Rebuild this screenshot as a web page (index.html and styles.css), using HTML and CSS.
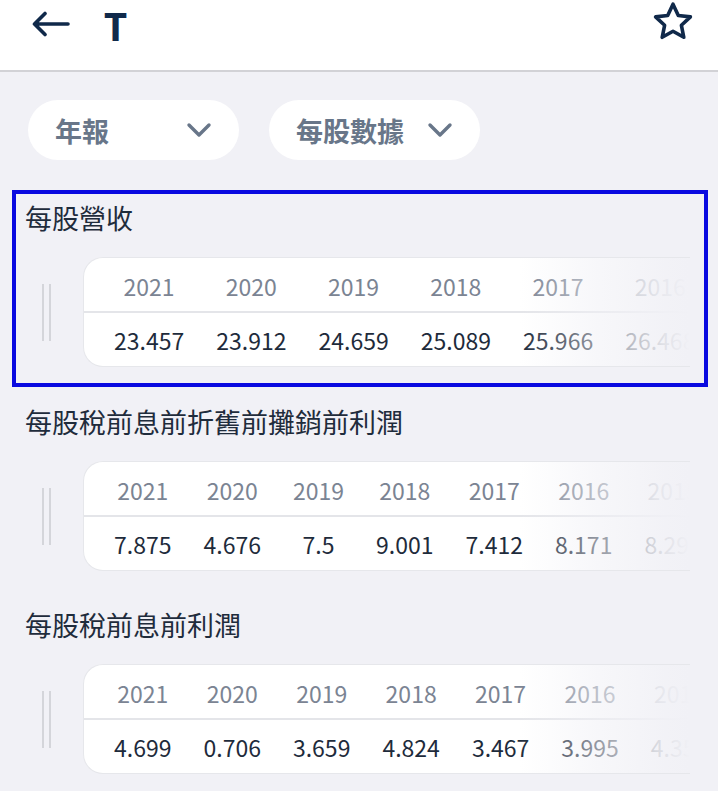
FILE: index.html
```html
<!DOCTYPE html>
<html lang="zh-Hant">
<head>
<meta charset="utf-8">
<title>T</title>
<link rel="stylesheet" href="styles.css">
</head>
<body>
<header class="topbar">
  <div class="topbar-left">
    <svg class="back" width="38" height="26" viewBox="0 0 38 26" aria-hidden="true">
      <path d="M36 13H3M13 2.5L2.5 13L13 23.5" fill="none" stroke="#10294a" stroke-width="3.6" stroke-linecap="round" stroke-linejoin="round"/>
    </svg>
    <span class="ticker">T</span>
  </div>
  <svg class="star" width="42" height="40" viewBox="0 0 42 40" aria-hidden="true">
    <path d="M21 3.2l5.3 11.3 12.1 1.4-9 8.4 2.4 12-10.8-6.1-10.8 6.1 2.4-12-9-8.4 12.1-1.4z" fill="none" stroke="#10294a" stroke-width="3.6" stroke-linejoin="round"/>
  </svg>
</header>

<div class="filters">
  <div class="pill"><span>年報</span>
    <svg width="26" height="16" viewBox="0 0 26 16" aria-hidden="true"><path d="M3 3l10 10L23 3" fill="none" stroke="#687689" stroke-width="3.4" stroke-linecap="round" stroke-linejoin="round"/></svg>
  </div>
  <div class="pill"><span>每股數據</span>
    <svg width="26" height="16" viewBox="0 0 26 16" aria-hidden="true"><path d="M3 3l10 10L23 3" fill="none" stroke="#687689" stroke-width="3.4" stroke-linecap="round" stroke-linejoin="round"/></svg>
  </div>
</div>

<section class="block selected">
  <h2 class="block-title">每股營收</h2>
  <div class="row">
    <div class="grip"></div>
    <div class="card">
      <table class="data">
        <tr class="years"><td class="lead"></td><td>2021</td><td>2020</td><td>2019</td><td>2018</td><td>2017</td><td>2016</td><td>2015</td></tr>
        <tr class="vals"><td class="lead"></td><td>23.457</td><td>23.912</td><td>24.659</td><td>25.089</td><td>25.966</td><td>26.468</td><td>27.101</td></tr>
      </table>
      <div class="fade"></div>
    </div>
  </div>
</section>

<section class="block">
  <h2 class="block-title">每股稅前息前折舊前攤銷前利潤</h2>
  <div class="row">
    <div class="grip"></div>
    <div class="card">
      <table class="data">
        <tr class="years"><td class="lead"></td><td>2021</td><td>2020</td><td>2019</td><td>2018</td><td>2017</td><td>2016</td><td>2015</td></tr>
        <tr class="vals"><td class="lead"></td><td>7.875</td><td>4.676</td><td>7.5</td><td>9.001</td><td>7.412</td><td>8.171</td><td>8.293</td></tr>
      </table>
      <div class="fade"></div>
    </div>
  </div>
</section>

<section class="block">
  <h2 class="block-title">每股稅前息前利潤</h2>
  <div class="row">
    <div class="grip"></div>
    <div class="card">
      <table class="data">
        <tr class="years"><td class="lead"></td><td>2021</td><td>2020</td><td>2019</td><td>2018</td><td>2017</td><td>2016</td><td>2015</td></tr>
        <tr class="vals"><td class="lead"></td><td>4.699</td><td>0.706</td><td>3.659</td><td>4.824</td><td>3.467</td><td>3.995</td><td>4.351</td></tr>
      </table>
      <div class="fade"></div>
    </div>
  </div>
</section>
</body>
</html>
```

FILE: styles.css
```css
* { box-sizing: border-box; }
html, body { margin: 0; padding: 0; }
body {
  background: #f1f1f6;
  font-family: "Noto Sans CJK TC", "Noto Sans", sans-serif;
  width: 718px;
  height: 791px;
  overflow: hidden;
}
.topbar {
  height: 72px;
  background: #ffffff;
  border-bottom: 2px solid #d2d2d6;
  display: flex;
  align-items: flex-start;
  justify-content: space-between;
  padding: 0 24px 0 32px;
}
.topbar-left {
  display: flex;
  align-items: center;
  height: 52px;
}
.back { display: block; margin-top: -5px; }
.ticker {
  font-family: "Noto Sans", sans-serif;
  font-weight: 700;
  font-size: 40px;
  line-height: 52px;
  color: #10294a;
  margin-left: 34px;
}
.star { display: block; margin-top: 1px; }

.filters {
  display: flex;
  gap: 30px;
  padding: 28px 0 0 28px;
}
.pill {
  width: 211px;
  height: 60px;
  border-radius: 30px;
  background: #ffffff;
  display: flex;
  align-items: center;
  justify-content: space-between;
  padding: 0 27px 0 27px;
  font-size: 27px;
  font-weight: 700;
  color: #687689;
}
.pill svg { display: block; }

.block {
  margin: 30px 10px 0 12px;
  border: 4px solid transparent;
  padding: 6px 0 15px 0;
}
.block + .block { margin-top: 7px; }
.block.selected { border-color: #0a0ae0; padding-bottom: 16px; }
.block-title {
  margin: 0 0 21px 9px;
  font-size: 27px;
  font-weight: 400;
  line-height: 36px;
  color: #1f2c3c;
}
.row {
  display: flex;
  align-items: center;
}
.grip {
  flex: none;
  width: 9px;
  height: 57px;
  margin-left: 26px;
  border-left: 2px solid #d4d5da;
  border-right: 2px solid #d4d5da;
}
.card {
  position: relative;
  flex: 1;
  margin-left: 32px;
  margin-right: 14px;
  height: 110px;
  background: #ffffff;
  border: 1px solid #e6e7eb;
  border-right: none;
  border-radius: 20px 0 0 20px;
  overflow: hidden;
}
.data {
  border-collapse: collapse;
  white-space: nowrap;
}
.data td {
  padding: 0 16px;
  text-align: center;
  font-size: 23px;
}
.data td.lead { padding: 0 0 0 14px; }
.years td {
  height: 54px;
  color: #7b8493;
  border-bottom: 2px solid #e4e5e9;
  padding-top: 2px;
}
.vals td {
  height: 54px;
  color: #1e2b3b;
}
.fade {
  position: absolute;
  top: 0;
  right: 0;
  bottom: 0;
  width: 170px;
  background: linear-gradient(to right, rgba(241,241,246,0) 0%, rgba(241,241,246,0.55) 45%, rgba(241,241,246,0.92) 85%, #f1f1f6 100%);
}
```
